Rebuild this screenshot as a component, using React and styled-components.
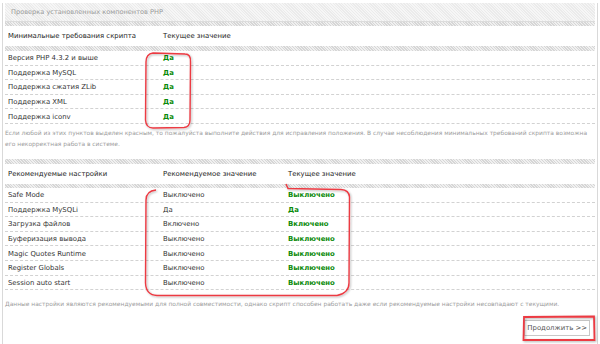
import React from 'react';
import styled, { createGlobalStyle } from 'styled-components';

const GlobalStyle = createGlobalStyle`
  html, body {
    margin: 0;
    padding: 0;
    background: #fff;
  }
  body {
    font-family: "DejaVu Sans", Verdana, sans-serif;
  }
`;

const minimal = [
  'Версия PHP 4.3.2 и выше',
  'Поддержка MySQL',
  'Поддержка сжатия ZLib',
  'Поддержка XML',
  'Поддержка iconv',
];

const recommended = [
  ['Safe Mode', 'Выключено', 'Выключено'],
  ['Поддержка MySQLi', 'Да', 'Да'],
  ['Загрузка файлов', 'Включено', 'Включено'],
  ['Буферизация вывода', 'Выключено', 'Выключено'],
  ['Magic Quotes Runtime', 'Выключено', 'Выключено'],
  ['Register Globals', 'Выключено', 'Выключено'],
  ['Session auto start', 'Выключено', 'Выключено'],
];

export default function App() {
  return (
    <>
      <GlobalStyle />
      <Page>
        <Panel>
          <TitleBar>Проверка установленных компонентов PHP</TitleBar>

          <Strip />
          <HeaderRow $cols={2}>
            <Cell>Минимальные требования скрипта</Cell>
            <Cell>Текущее значение</Cell>
          </HeaderRow>
          <Strip $h={5} />
          {minimal.map((name) => (
            <Row key={name} $cols={2}>
              <Cell>{name}</Cell>
              <Cell $ok>Да</Cell>
            </Row>
          ))}
          <Note $top={3}>
            Если любой из этих пунктов выделен красным, то пожалуйста выполните действия для
            исправления положения. В случае несоблюдения минимальных требований скрипта возможна
            его некорректная работа в системе.
          </Note>

          <Strip $top={10} $h={5} />
          <HeaderRow $cols={3}>
            <Cell>Рекомендуемые настройки</Cell>
            <Cell>Рекомендуемое значение</Cell>
            <Cell>Текущее значение</Cell>
          </HeaderRow>
          <Strip />
          {recommended.map(([name, want, cur]) => (
            <Row key={name} $cols={3}>
              <Cell>{name}</Cell>
              <Cell>{want}</Cell>
              <Cell $ok>{cur}</Cell>
            </Row>
          ))}
          <Note $top={8}>
            Данные настройки являются рекомендуемыми для полной совместимости, однако скрипт
            способен работать даже если рекомендуемые настройки несовпадают с текущими.
          </Note>

          <Actions>
            <Button type="button">Продолжить &gt;&gt;</Button>
          </Actions>
        </Panel>

        <Marks width="600" height="344" viewBox="0 0 600 344">
          <defs>
            <filter id="sh" x="-10%" y="-10%" width="120%" height="120%">
              <feDropShadow dx="1" dy="1" stdDeviation="0.8" floodColor="#000" floodOpacity="0.3" />
            </filter>
          </defs>
          <g fill="none" stroke="#ec3a43" strokeWidth="1.4" filter="url(#sh)">
            <path d="M153 53 Q146 54 146 62 L145.5 120 Q146 128 153 128 L184 127.5 Q190 127 190 120 L190.5 62 Q191 54 185 54 Z" />
            <path d="M156 190 Q146 191 146 200 L145.5 283 Q146 295 157 295.5 L337 295.5 Q349 293 349 283 L349.5 197 Q349 190 341 189.5 L288 188.5 L286 184" />
            <path d="M524 317 L594 316.5 L594.5 340 L523.5 340 Z" strokeWidth="1.8" />
          </g>
        </Marks>
      </Page>
    </>
  );
}

const Page = styled.div`
  position: relative;
  width: 600px;
  height: 344px;
  overflow: hidden;
  padding-top: 3px;
  box-sizing: border-box;
`;

const Panel = styled.div`
  margin-left: 2px;
  width: 596px;
  min-height: 344px;
  box-sizing: border-box;
  padding: 0 2px;
  border-left: 1px solid #d9d9d9;
  border-right: 1px solid #d9d9d9;
`;

const TitleBar = styled.div`
  height: 18px;
  line-height: 18px;
  padding-left: 6px;
  font-size: 6.6px;
  color: #9a9a9a;
  background: repeating-linear-gradient(45deg, #ebebeb 0 1px, #f6f6f6 1px 2px);
  border-bottom: 1px solid #dcdcdc;
`;

const Strip = styled.div`
  height: ${(p) => p.$h || 4}px;
  margin-top: ${(p) => p.$top || 0}px;
  background: repeating-linear-gradient(45deg, #d6d6d6 0 1px, #f0f0f0 1px 2px);
`;

const Grid = styled.div`
  display: grid;
  grid-template-columns: ${(p) => (p.$cols === 3 ? '155px 125px 1fr' : '155px 1fr')};
  align-items: center;
`;

const HeaderRow = styled(Grid)`
  height: 20px;
  color: #222;
  font-size: 6.9px;
`;

const Row = styled(Grid)`
  box-sizing: border-box;
  height: 14.6px;
  padding-top: 1px;
  border-bottom: 1px dashed #d2d2d2;
  color: #333;
  font-size: 6.9px;
`;

const Cell = styled.div`
  padding-left: 3px;
  white-space: nowrap;
  font-weight: ${(p) => (p.$ok ? 'bold' : 'normal')};
  color: ${(p) => (p.$ok ? '#0a8a0a' : 'inherit')};
`;

const Note = styled.p`
  margin: ${(p) => p.$top || 3}px 0 0;
  font-size: 5.95px;
  line-height: 11px;
  color: #9c9c9c;
`;

const Actions = styled.div`
  display: flex;
  justify-content: flex-end;
  padding: 11px 5px 0 0;
`;

const Button = styled.button`
  height: 16px;
  padding: 0 2px;
  background: #fff;
  border: 1px solid #c8c8c8;
  font-family: "DejaVu Sans", Verdana, sans-serif;
  font-size: 6.9px;
  color: #555;
  cursor: pointer;
`;

const Marks = styled.svg`
  position: absolute;
  left: 0;
  top: 0;
  pointer-events: none;
`;
